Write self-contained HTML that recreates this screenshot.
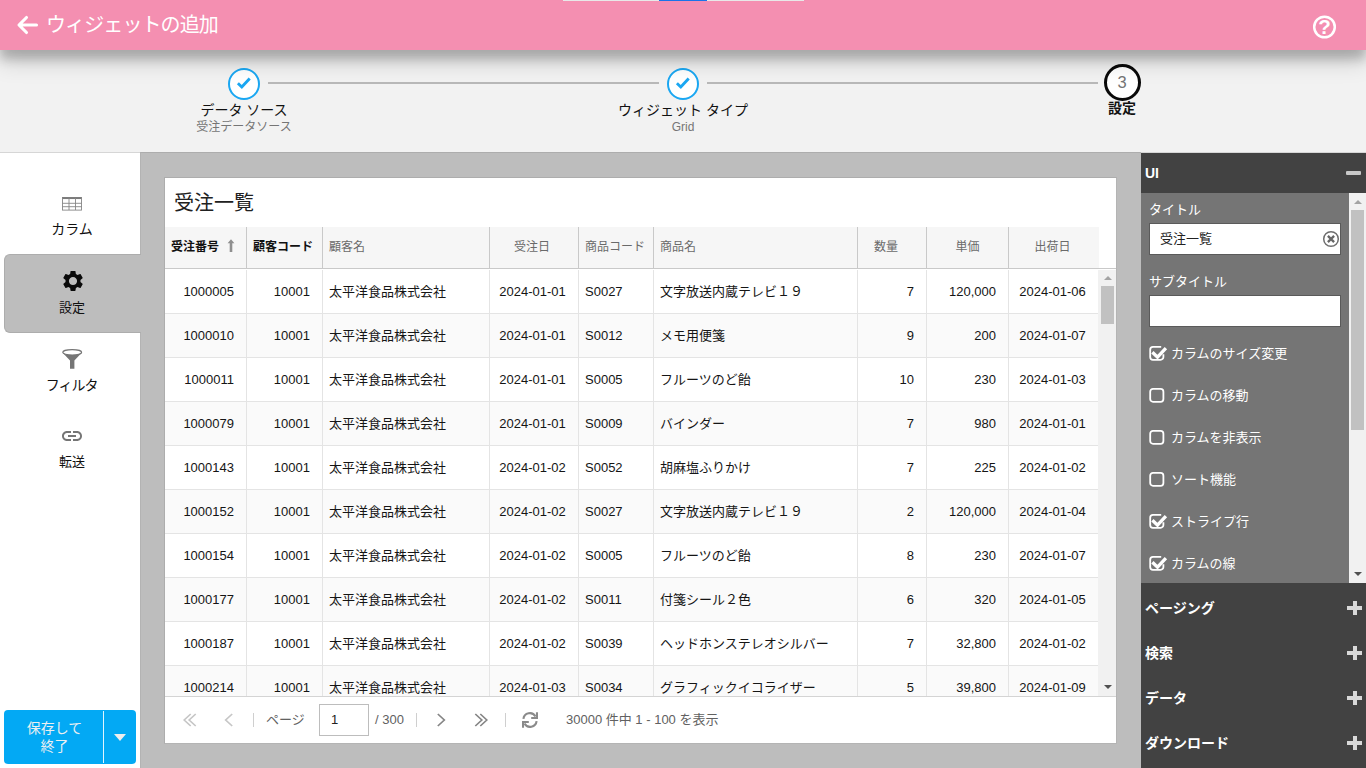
<!DOCTYPE html>
<html lang="ja">
<head>
<meta charset="utf-8">
<title>ウィジェットの追加</title>
<style>
*{box-sizing:border-box;margin:0;padding:0}
html,body{width:1366px;height:768px;overflow:hidden}
body{position:relative;background:#f2f2f2;font-family:"Liberation Sans","Noto Sans CJK JP",sans-serif;color:#212121;font-size:14px}
.abs{position:absolute}
/* header */
#hdr{position:absolute;left:0;top:0;width:1366px;height:50px;background:#f48fb1;box-shadow:0 12px 22px rgba(0,0,0,.17),0 9px 10px rgba(0,0,0,.19);z-index:5}
#hdr .ttl{position:absolute;left:46px;top:11px;font-size:20px;line-height:28px;color:#fff;white-space:nowrap;letter-spacing:-0.9px}
#topbar{position:absolute;left:563px;top:0;width:241px;height:1px;background:#e8e8e8}
#topbar i{position:absolute;left:96px;top:0;width:48px;height:1px;background:#1a73e8}
/* stepper */
#steps{position:absolute;left:0;top:49px;width:1366px;height:103px;background:#f2f2f2}
.stepline{position:absolute;height:2px;background:#b9b9b9;top:82px}
.sc{position:absolute;border-radius:50%;background:#fff}
.sc.done{border:2px solid #1aa7f2;width:32px;height:32px;top:68px}
.sc.done svg{position:absolute;left:-2px;top:-2px}
.sc.cur{border:3px solid #0a0a0a;width:37px;height:37px;top:63.5px;font-size:16.5px;color:#757575;text-align:center;line-height:31px}
.sl{position:absolute;width:300px;text-align:center;white-space:nowrap}
.sl.t{font-size:14px;line-height:20px;color:#111;top:100px}
.sl.s{font-size:12px;line-height:16px;color:#757575;top:119px}
/* main */
#sepline{position:absolute;left:0;top:152px;width:1366px;height:1px;background:#d6d6d6}
#side{position:absolute;left:0;top:153px;width:140px;height:615px;background:#fff;z-index:2}
#center{position:absolute;left:140px;top:152px;width:1001px;height:616px;background:#bdbdbd;border-top:1px solid #adadad;border-left:1px solid #b3b3b3}
.nav{position:absolute;left:4px;width:136px;height:78px;text-align:center;font-size:14px;color:#111}
.nav.sel{background:#bdbdbd;border-radius:6px 0 0 6px}
.nav svg{position:absolute;left:56px;top:14px}
.nav span{position:absolute;left:0;width:136px;top:43px;line-height:20px}

/* card */
#card{position:absolute;left:164px;top:177px;width:953px;height:567px;background:#fff;border:1px solid #adadad;border-right-color:#b4b4b4;border-bottom-color:#b4b4b4}
#card .ct{position:absolute;left:9px;top:10px;font-size:20px;line-height:30px;color:#212121;white-space:nowrap}
#gh{position:absolute;left:0;top:49px;width:951px;height:42px;border-bottom:1px solid #c9c9c9;display:flex}
#gh .hc{height:41px;background:#f6f6f6;border-right:1px solid #c9c9c9;font-size:12px;line-height:41px;color:#6a6a6a;white-space:nowrap;position:relative;padding-left:6px;top:0}
#gh .hc.b{font-weight:bold;color:#111}
#gh .hc.c{text-align:center;padding:0}
#gh .hc:last-child{border-right:none}
.c1{width:82px}.c2{width:76px}.c3{width:167px}.c4{width:89px}.c5{width:75px}.c6{width:204px}.c7{width:69px}.c8{width:82px}.c9{width:90px}
#gb{position:absolute;left:0;top:92px;width:934px;height:426px;overflow:hidden}
.gr{display:flex;height:44px;border-bottom:1px solid #e4e4e4;background:#fff}
.gr.alt{background:#fafafa}
.gc{height:43px;line-height:43px;font-size:13px;color:#151515;border-right:1px solid #e4e4e4;white-space:nowrap;overflow:hidden}
.gc.r{text-align:right;padding-right:12px}
.gc.l{text-align:left;padding-left:6px}
.gc.c{text-align:center;padding-right:3px}
.gc.c9{border-right:none}
#gsb{position:absolute;left:933px;top:92px;width:18px;height:426px;background:#f1f1f1}
#gsb .th{position:absolute;left:3px;top:16px;width:13px;height:38px;background:#c1c1c1}
.tri{position:absolute;width:0;height:0;border-left:4px solid transparent;border-right:4px solid transparent}
.tri.up{border-bottom:4px solid #a3a3a3}
.tri.dn{border-top:4px solid #505050}
#pg{position:absolute;left:0;top:518px;width:951px;height:47px;border-top:1px solid #d4d4d4;font-size:13px;color:#616161}
#pg .t{position:absolute;top:12.5px;line-height:20px;white-space:nowrap}
#pg .sep{position:absolute;top:16px;width:1px;height:14px;background:#cfcfcf}
#pg .inp{position:absolute;left:154px;top:7px;width:50px;height:32px;border:1px solid #bdbdbd;background:#fff;color:#212121;font-size:13px;line-height:29px;padding-left:11px}
#pg svg{position:absolute}

/* save button */
#save{z-index:3;position:absolute;left:4px;top:710px;width:132px;height:54px;background:#03a9f4;border-radius:4px;color:#eceff1;font-size:14px;line-height:18px;text-align:center}
#save .tx{position:absolute;left:1px;top:9px;width:99px}
#save .dv{position:absolute;left:99px;top:1px;width:1px;height:52px;background:#e1f5fe}
#save .ar{position:absolute;left:110px;top:24px;width:0;height:0;border-left:6px solid transparent;border-right:6px solid transparent;border-top:7px solid #eee}
/* right panel */
#rp{position:absolute;left:1141px;top:153px;width:225px;height:615px;background:#424242;color:#fff}
#rp .sh{position:absolute;left:4px;font-size:14px;font-weight:bold;line-height:20px;white-space:nowrap}
#rpc{position:absolute;left:0;top:40px;width:208px;height:390px;background:#757575}
#rpc .lb{position:absolute;left:8px;font-size:13px;line-height:18px;white-space:nowrap;color:#fff}
#rpc .in{position:absolute;left:8px;width:192px;height:32px;background:#fff;border:1px solid #5a5a5a;color:#212121;font-size:13px;line-height:30px;padding-left:10px}
#rpc .ck{position:absolute;left:8px;width:190px;height:20px;font-size:13px;line-height:20px;white-space:nowrap;color:#fff}
#rpc .ck svg{position:absolute;left:-1px;top:2px}
#rpc .ck span{position:absolute;left:22px;top:1px}
#rsb{position:absolute;left:208px;top:40px;width:17px;height:390px;background:#f1f1f1}
#rsb .th{position:absolute;left:2px;top:17px;width:13px;height:220px;background:#c1c1c1}
.plus{position:absolute;left:206px;width:15px;height:14px}
.plus:before{content:"";position:absolute;left:0;top:5px;width:15px;height:4px;background:#d9d9d9}
.plus:after{content:"";position:absolute;left:5.500px;top:0;width:4px;height:14px;background:#d9d9d9}
</style>
</head>
<body>
<div id="hdr">
  <div id="topbar"><i></i></div>
  <svg class="abs" style="left:15px;top:13px" width="26" height="24" viewBox="0 0 26 24"><path d="M21.500 12H4.500M11.500 4.500L4 12l7.500 7.500" fill="none" stroke="#fff" stroke-width="3.100" stroke-linecap="round" stroke-linejoin="round"/></svg>
  <div class="ttl">ウィジェットの追加</div>
  <svg class="abs" style="left:1311px;top:14px" width="27" height="26" viewBox="0 0 27 26"><circle cx="13.500" cy="13" r="10.300" fill="none" stroke="#fff" stroke-width="2.500"/><text x="13.500" y="20.4" text-anchor="middle" font-family="Liberation Sans, sans-serif" font-weight="bold" font-size="20.5" fill="#fff">?</text></svg>
</div>
<div id="steps"></div>
<div class="stepline" style="left:268px;width:391px"></div>
<div class="stepline" style="left:707px;width:391px"></div>
<div class="sc done" style="left:228px"><svg width="32" height="32" viewBox="0 0 32 32"><path d="M9.900 15.300l3.900 3.700 7.900-8.400" fill="none" stroke="#1aa7f2" stroke-width="2.900"/></svg></div>
<div class="sc done" style="left:667px"><svg width="32" height="32" viewBox="0 0 32 32"><path d="M9.900 15.300l3.900 3.700 7.900-8.400" fill="none" stroke="#1aa7f2" stroke-width="2.900"/></svg></div>
<div class="sc cur" style="left:1103.5px">3</div>
<div class="sl t" style="left:94px">データ ソース</div>
<div class="sl s" style="left:94px">受注データソース</div>
<div class="sl t" style="left:533px">ウィジェット タイプ</div>
<div class="sl s" style="left:533px">Grid</div>
<div class="sl t" style="left:972px;font-weight:bold;top:98px">設定</div>

<div id="sepline"></div>
<div id="side">
  <div class="nav" style="top:24px"><svg width="24" height="24" viewBox="0 0 24 24" style="left:56px;top:15px"><g fill="none" stroke="#868686" stroke-width=".9"><rect x="2.5" y="5.5" width="19" height="12.6"/><path d="M2.500 6.100h19" stroke-width="1.900" stroke="#7a7a7a"/><path d="M2.500 11.300h19M2.500 14.700h19M9 6v12M15.500 6v12"/></g></svg><span style="top:42px">カラム</span></div>
  <div class="nav sel" style="top:101px;height:79px;width:137px;border:1px solid #adadad;border-right:none"><svg width="24" height="24" viewBox="0 0 24 24" style="left:55.9px;top:14px"><path fill="#0a0a0a" fill-rule="evenodd" d="M19.43 12.98c.04-.32.07-.64.07-.98s-.03-.66-.07-.98l2.11-1.65c.19-.15.24-.42.12-.64l-2-3.46c-.12-.22-.39-.3-.61-.22l-2.49 1c-.52-.4-1.08-.73-1.69-.98l-.38-2.65C14.46 2.18 14.25 2 14 2h-4c-.25 0-.46.18-.49.42l-.38 2.65c-.61.25-1.17.59-1.69.98l-2.49-1c-.23-.09-.49 0-.61.22l-2 3.46c-.13.22-.07.49.12.64l2.11 1.65c-.04.32-.07.65-.07.98s.03.66.07.98l-2.11 1.65c-.19.15-.24.42-.12.64l2 3.46c.12.22.39.3.61.22l2.49-1c.52.4 1.08.73 1.69.98l.38 2.65c.03.24.24.42.49.42h4c.25 0 .46-.18.49-.42l.38-2.65c.61-.25 1.17-.59 1.69-.98l2.49 1c.23.09.49 0 .61-.22l2-3.46c.12-.22.07-.49-.12-.64l-2.11-1.65zM12 16.1c-2.26 0-4.1-1.84-4.1-4.1s1.84-4.1 4.1-4.1 4.1 1.84 4.1 4.1-1.84 4.1-4.1 4.1z"/></svg><span style="top:43px;font-size:13px;left:-1px">設定</span></div>
  <div class="nav" style="top:180px"><svg width="24" height="24" viewBox="0 0 24 24" style="left:56px;top:14px"><path d="M2.400 5.500L10 13.600v8.100h4.400v-8.100l7.600-8.100z" fill="#757575"/><ellipse cx="12.200" cy="5.300" rx="9.400" ry="2.700" fill="#fff" stroke="#757575" stroke-width="1.200"/></svg><span style="top:42px;letter-spacing:-1px;left:-0.3px">フィルタ</span></div>
  <div class="nav" style="top:257px"><svg width="24" height="24" viewBox="0 0 24 24" style="left:56px;top:14px"><path fill="#757575" d="M3.900 12c0-1.710 1.390-3.100 3.100-3.100h4V7H7c-2.760 0-5 2.240-5 5s2.240 5 5 5h4v-1.900H7c-1.710 0-3.100-1.390-3.100-3.100zM8 13h8v-2H8v2zm9-6h-4v1.900h4c1.710 0 3.100 1.390 3.100 3.100s-1.390 3.100-3.100 3.100h-4V17h4c2.760 0 5-2.240 5-5s-2.240-5-5-5z"/></svg><span style="top:42px;font-size:13px">転送</span></div>
</div>
<div id="center"></div>

<div id="card">
  <div class="ct">受注一覧</div>
  <div id="gh">
    <div class="hc b c1">受注番号<svg style="position:absolute;left:62px;top:12px" width="8" height="14" viewBox="0 0 8 14"><path d="M4 .3L7.4 4.300H5.300V13H2.700V4.300H.6z" fill="#8f8f8f"/></svg></div>
    <div class="hc b c2">顧客コード</div>
    <div class="hc c3">顧客名</div>
    <div class="hc c c4" style="padding-right:4px">受注日</div>
    <div class="hc c5">商品コード</div>
    <div class="hc c6">商品名</div>
    <div class="hc c c7" style="padding-right:12px">数量</div>
    <div class="hc c c8">単価</div>
    <div class="hc c c9" style="padding-right:3px">出荷日</div>
  </div>
  <div id="gb">
<div class="gr"><div class="gc c1 r">1000005</div><div class="gc c2 r">10001</div><div class="gc c3 l">太平洋食品株式会社</div><div class="gc c4 c">2024-01-01</div><div class="gc c5 l">S0027</div><div class="gc c6 l">文字放送内蔵テレビ１９</div><div class="gc c7 r">7</div><div class="gc c8 r">120,000</div><div class="gc c9 c">2024-01-06</div></div>
<div class="gr alt"><div class="gc c1 r">1000010</div><div class="gc c2 r">10001</div><div class="gc c3 l">太平洋食品株式会社</div><div class="gc c4 c">2024-01-01</div><div class="gc c5 l">S0012</div><div class="gc c6 l">メモ用便箋</div><div class="gc c7 r">9</div><div class="gc c8 r">200</div><div class="gc c9 c">2024-01-07</div></div>
<div class="gr"><div class="gc c1 r">1000011</div><div class="gc c2 r">10001</div><div class="gc c3 l">太平洋食品株式会社</div><div class="gc c4 c">2024-01-01</div><div class="gc c5 l">S0005</div><div class="gc c6 l">フルーツのど飴</div><div class="gc c7 r">10</div><div class="gc c8 r">230</div><div class="gc c9 c">2024-01-03</div></div>
<div class="gr alt"><div class="gc c1 r">1000079</div><div class="gc c2 r">10001</div><div class="gc c3 l">太平洋食品株式会社</div><div class="gc c4 c">2024-01-01</div><div class="gc c5 l">S0009</div><div class="gc c6 l">バインダー</div><div class="gc c7 r">7</div><div class="gc c8 r">980</div><div class="gc c9 c">2024-01-01</div></div>
<div class="gr"><div class="gc c1 r">1000143</div><div class="gc c2 r">10001</div><div class="gc c3 l">太平洋食品株式会社</div><div class="gc c4 c">2024-01-02</div><div class="gc c5 l">S0052</div><div class="gc c6 l">胡麻塩ふりかけ</div><div class="gc c7 r">7</div><div class="gc c8 r">225</div><div class="gc c9 c">2024-01-02</div></div>
<div class="gr alt"><div class="gc c1 r">1000152</div><div class="gc c2 r">10001</div><div class="gc c3 l">太平洋食品株式会社</div><div class="gc c4 c">2024-01-02</div><div class="gc c5 l">S0027</div><div class="gc c6 l">文字放送内蔵テレビ１９</div><div class="gc c7 r">2</div><div class="gc c8 r">120,000</div><div class="gc c9 c">2024-01-04</div></div>
<div class="gr"><div class="gc c1 r">1000154</div><div class="gc c2 r">10001</div><div class="gc c3 l">太平洋食品株式会社</div><div class="gc c4 c">2024-01-02</div><div class="gc c5 l">S0005</div><div class="gc c6 l">フルーツのど飴</div><div class="gc c7 r">8</div><div class="gc c8 r">230</div><div class="gc c9 c">2024-01-07</div></div>
<div class="gr alt"><div class="gc c1 r">1000177</div><div class="gc c2 r">10001</div><div class="gc c3 l">太平洋食品株式会社</div><div class="gc c4 c">2024-01-02</div><div class="gc c5 l">S0011</div><div class="gc c6 l">付箋シール２色</div><div class="gc c7 r">6</div><div class="gc c8 r">320</div><div class="gc c9 c">2024-01-05</div></div>
<div class="gr"><div class="gc c1 r">1000187</div><div class="gc c2 r">10001</div><div class="gc c3 l">太平洋食品株式会社</div><div class="gc c4 c">2024-01-02</div><div class="gc c5 l">S0039</div><div class="gc c6 l">ヘッドホンステレオシルバー</div><div class="gc c7 r">7</div><div class="gc c8 r">32,800</div><div class="gc c9 c">2024-01-02</div></div>
<div class="gr alt"><div class="gc c1 r">1000214</div><div class="gc c2 r">10001</div><div class="gc c3 l">太平洋食品株式会社</div><div class="gc c4 c">2024-01-03</div><div class="gc c5 l">S0034</div><div class="gc c6 l">グラフィックイコライザー</div><div class="gc c7 r">5</div><div class="gc c8 r">39,800</div><div class="gc c9 c">2024-01-09</div></div>
  </div>
  <div id="gsb"><div class="tri up" style="left:6px;top:6px"></div><div class="th"></div><div class="tri dn" style="left:6px;top:415px"></div></div>
  <div id="pg">
    <svg style="left:18px;top:16px" width="14" height="14" viewBox="0 0 14 14"><path d="M7.700 1L1.200 7l6.500 6M12.700 1L6.200 7l6.500 6" fill="none" stroke="#c6c6c6" stroke-width="1.700"/></svg>
    <svg style="left:59px;top:16px" width="10" height="14" viewBox="0 0 10 14"><path d="M8.200 1L1.700 7l6.500 6" fill="none" stroke="#c6c6c6" stroke-width="1.700"/></svg>
    <div class="sep" style="left:88px"></div>
    <div class="t" style="left:101px">ページ</div>
    <div class="inp">1</div>
    <div class="t" style="left:210px">/ 300</div>
    <div class="sep" style="left:251px"></div>
    <svg style="left:271px;top:16px" width="10" height="14" viewBox="0 0 10 14"><path d="M1.800 1l6.500 6-6.500 6" fill="none" stroke="#858585" stroke-width="1.700"/></svg>
    <svg style="left:309px;top:16px" width="14" height="14" viewBox="0 0 14 14"><path d="M1.300 1l6.500 6-6.500 6M6.300 1l6.500 6-6.500 6" fill="none" stroke="#858585" stroke-width="1.700"/></svg>
    <div class="sep" style="left:340px"></div>
    <svg style="left:357px;top:15px" width="16" height="16" viewBox="0 0 16 16"><g fill="none" stroke="#8a8a8a" stroke-width="2.100"><path d="M1.400 6.900A6.500 6.500 0 0 1 13.500 4.500"/><path d="M15 .3V6H9.200"/><path d="M14.600 9.100A6.500 6.500 0 0 1 2.500 11.500"/><path d="M1 15.700V10H6.800"/></g></svg>
    <div class="t" style="left:401px;top:12.500px">30000 件中 1 - 100 を表示</div>
  </div>
</div>


<div id="save"><div class="tx">保存して<br>終了</div><div class="dv"></div><div class="ar"></div></div>
<div id="rp">
  <div class="sh" style="top:10px">UI</div>
  <div class="abs" style="left:205px;top:18px;width:15px;height:4px;background:#c8c8c8;border-radius:1px"></div>
  <div id="rpc">
    <div class="lb" style="top:8px">タイトル</div>
    <div class="in" style="top:30px">受注一覧<svg class="abs" style="left:172px;top:6px" width="18" height="18" viewBox="0 0 18 18"><circle cx="9" cy="9" r="7.3" fill="none" stroke="#6e6e6e" stroke-width="1.5"/><path d="M5.900 5.900l6.200 6.200M12.100 5.900l-6.200 6.200" stroke="#666" stroke-width="2.300"/></svg></div>
    <div class="lb" style="top:80px">サブタイトル</div>
    <div class="in" style="top:102px"></div>
<div class="ck" style="top:150px"><svg width="20" height="17" viewBox="0 0 20 17"><path d="M13.2 1.900H5a2.800 2.800 0 0 0-2.800 2.800V12a2.800 2.800 0 0 0 2.800 2.800h7.600a2.800 2.800 0 0 0 2.800-2.800V9.200" fill="none" stroke="#fff" stroke-width="1.800"/><path d="M4.400 7.300l5.100 4.900 8.400-9.100" fill="none" stroke="#fff" stroke-width="3.300"/></svg><span>カラムのサイズ変更</span></div>
<div class="ck" style="top:192px"><svg width="20" height="17" viewBox="0 0 20 17"><rect x="2.200" y="1.900" width="13.200" height="12.900" rx="2.800" fill="none" stroke="#fff" stroke-width="1.800"/></svg><span>カラムの移動</span></div>
<div class="ck" style="top:234px"><svg width="20" height="17" viewBox="0 0 20 17"><rect x="2.200" y="1.900" width="13.200" height="12.900" rx="2.800" fill="none" stroke="#fff" stroke-width="1.800"/></svg><span>カラムを非表示</span></div>
<div class="ck" style="top:276px"><svg width="20" height="17" viewBox="0 0 20 17"><rect x="2.200" y="1.900" width="13.200" height="12.900" rx="2.800" fill="none" stroke="#fff" stroke-width="1.800"/></svg><span>ソート機能</span></div>
<div class="ck" style="top:318px"><svg width="20" height="17" viewBox="0 0 20 17"><path d="M13.2 1.900H5a2.800 2.800 0 0 0-2.800 2.800V12a2.800 2.800 0 0 0 2.800 2.800h7.600a2.800 2.800 0 0 0 2.800-2.800V9.200" fill="none" stroke="#fff" stroke-width="1.800"/><path d="M4.400 7.300l5.100 4.900 8.400-9.100" fill="none" stroke="#fff" stroke-width="3.300"/></svg><span>ストライプ行</span></div>
<div class="ck" style="top:360px"><svg width="20" height="17" viewBox="0 0 20 17"><path d="M13.2 1.900H5a2.800 2.800 0 0 0-2.800 2.800V12a2.800 2.800 0 0 0 2.800 2.800h7.600a2.800 2.800 0 0 0 2.800-2.800V9.200" fill="none" stroke="#fff" stroke-width="1.800"/><path d="M4.400 7.300l5.100 4.900 8.400-9.100" fill="none" stroke="#fff" stroke-width="3.300"/></svg><span>カラムの線</span></div>

  </div>
  <div id="rsb"><div class="tri up" style="left:5px;top:7px"></div><div class="th"></div><div class="tri dn" style="left:5px;top:379px"></div></div>
  <div class="sh" style="top:444.5px">ページング</div><div class="plus" style="top:448px"></div>
  <div class="sh" style="top:489.5px">検索</div><div class="plus" style="top:493px"></div>
  <div class="sh" style="top:534.5px">データ</div><div class="plus" style="top:538px"></div>
  <div class="sh" style="top:579.5px">ダウンロード</div><div class="plus" style="top:583px"></div>
</div>
</body>
</html>
